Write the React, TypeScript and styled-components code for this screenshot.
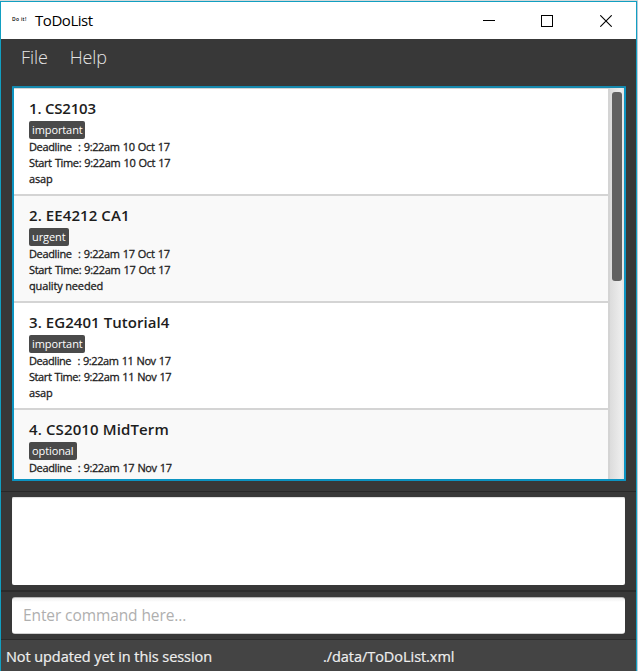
import React from "react";
import styled, { createGlobalStyle } from "styled-components";

const GlobalStyle = createGlobalStyle`
  * { box-sizing: border-box; }
  html, body { margin: 0; padding: 0; overflow: hidden; }
  body { font-family: "Open Sans", "Noto Sans", sans-serif; background: #c3d3e2; }
`;

const Desktop = styled.div`
  width: 638px;
  height: 671px;
  padding-top: 1px;
  background: linear-gradient(#d5d9da 0 1px, #b9cbdc 1px);
`;

const Window = styled.div`
  width: 637px;
  height: 670px;
  display: flex;
  flex-direction: column;
  border: 1px solid #129fc1;
  border-bottom: 0;
  background: #383838;
`;

const TitleBar = styled.header`
  height: 37px;
  flex: none;
  display: flex;
  align-items: center;
  background: #fff;
  color: #000;
`;

const AppIcon = styled.span`
  width: 16px;
  margin-left: 11px;
  padding-bottom: 3px;
  font-size: 5px;
  font-weight: 600;
  line-height: 8px;
  letter-spacing: 0.3px;
  white-space: nowrap;
`;

const AppTitle = styled.span`
  flex: 1;
  margin-left: 7px;
  padding-bottom: 1px;
  font-size: 15px;
  line-height: 20px;
  letter-spacing: -0.45px;
`;

const WindowButton = styled.button`
  width: 58px;
  height: 37px;
  padding: 0;
  border: 0;
  display: grid;
  place-items: center;
  background: transparent;

  &:last-child { width: 60px; }
`;

const Controls = styled.div`
  display: flex;
`;

const MenuBar = styled.nav`
  height: 47px;
  flex: none;
  display: flex;
  gap: 22px;
  padding: 6px 20px 0;
  color: #e4e4e4;
`;

const MenuItem = styled.span<{ $track: number }>`
  font-size: 18px;
  font-weight: 300;
  line-height: 24px;
  letter-spacing: ${(p) => p.$track}px;
`;

const ListFrame = styled.section`
  height: 395px;
  flex: none;
  margin: 0 10px 0 11px;
  border: 2px solid #0c94c2;
  border-top-color: #1689ae;
  border-radius: 1px;
  display: flex;
  overflow: hidden;
  background: #fff;
`;

const TaskList = styled.div`
  flex: 1;
  height: 391px;
  overflow: hidden;
  border-top: 1px solid #d4d4d4;
`;

const TaskCell = styled.article<{ $shaded: boolean }>`
  height: 107px;
  padding: 7px 15px 0;
  display: flex;
  flex-direction: column;
  align-items: flex-start;
  border-bottom: 2px solid #d4d4d4;
  background: ${(p) => (p.$shaded ? "#f9f9f9" : "#fff")};
  color: #1d1d1d;
`;

const TaskTitle = styled.h2<{ $track: number }>`
  margin: 0 0 1px;
  font-size: 15px;
  font-weight: 600;
  line-height: 24px;
  letter-spacing: ${(p) => p.$track}px;
  white-space: pre;
`;

const Tag = styled.span<{ $width: number }>`
  width: ${(p) => p.$width}px;
  height: 18px;
  padding-left: 3px;
  border-radius: 2px;
  background: #4a4a4a;
  color: #fff;
  font-size: 11px;
  line-height: 18px;
  letter-spacing: -0.1px;
  white-space: nowrap;
`;

const Detail = styled.span<{ $track: number; $wordGap?: number }>`
  font-size: 11px;
  line-height: 16px;
  letter-spacing: ${(p) => p.$track}px;
  word-spacing: ${(p) => p.$wordGap ?? 0}px;
  -webkit-text-stroke: 0.3px #1d1d1d;
  white-space: pre;
`;

const ScrollTrack = styled.div`
  width: 16px;
  height: 391px;
  padding: 4px 2px 0;
  border-left: 2px solid #d4d4d4;
  background: linear-gradient(90deg, #dcdcdc, #ededed 80%, #e2e2e2);
`;

const ScrollThumb = styled.div`
  width: 10px;
  height: 189px;
  border-radius: 3px;
  background: #616161;
`;

const ResultPane = styled.section`
  height: 99px;
  flex: none;
  margin-top: 10px;
  padding: 5px 11px 0;
  border-top: 1px solid #282828;
`;

const ResultDisplay = styled.div`
  height: 88px;
  border-radius: 2px;
  background: #fff;
  box-shadow: inset 0 1px 1px #ddd;
`;

const CommandPane = styled.section`
  height: 49px;
  flex: none;
  padding: 5px 11px 0;
  border-top: 2px solid #2b2b2b;
`;

const CommandInput = styled.input`
  display: block;
  width: 613px;
  height: 37px;
  padding: 0 0 1px 11px;
  border: 1px solid #b5b5b5;
  border-bottom-color: #d0d0d0;
  border-right: 0;
  border-left: 0;
  border-radius: 3px;
  outline: 0;
  background: linear-gradient(#eee, #fff 4px);
  font-family: inherit;
  font-size: 15.5px;
  letter-spacing: -0.1px;

  &::placeholder { color: #afafaf; opacity: 1; }
`;

const StatusBar = styled.footer`
  flex: 1;
  display: grid;
  grid-template-columns: 317px 1fr;
  padding: 5px 5px 0;
  border-top: 1px solid #2b2b2b;
  background: #444;
  color: #eee;
`;

const StatusText = styled.span<{ $track: number }>`
  font-size: 14.5px;
  line-height: 24px;
  letter-spacing: ${(p) => p.$track}px;
  -webkit-text-stroke: 0.2px #eee;
  white-space: nowrap;
`;

const tagWidths: Record<string, number> = { important: 56, urgent: 40, optional: 48 };

const tasks = [
  { title: "1. CS2103", track: -0.2, tag: "important", date: "9:22am 10 Oct 17", dateTrack: -0.36, note: "asap" },
  { title: "2. EE4212 CA1", track: 0.08, tag: "urgent", date: "9:22am 17 Oct 17", dateTrack: -0.36, note: "quality needed" },
  { title: "3. EG2401 Tutorial4", track: 0.06, tag: "important", date: "9:22am 11 Nov 17", dateTrack: -0.42, note: "asap" },
  { title: "4. CS2010 MidTerm", track: 0.12, tag: "optional", date: "9:22am 17 Nov 17", dateTrack: -0.38, note: "" },
];

export default function App() {
  return (
    <Desktop>
      <GlobalStyle />
      <Window>
        <TitleBar>
          <AppIcon>Do it!</AppIcon>
          <AppTitle>ToDoList</AppTitle>
          <Controls>
            <WindowButton aria-label="Minimize">
              <svg width="12" height="12" shapeRendering="crispEdges"><path d="M0 5.5H12" stroke="#000" /></svg>
            </WindowButton>
            <WindowButton aria-label="Maximize">
              <svg width="12" height="12" shapeRendering="crispEdges"><rect x=".5" y=".5" width="11" height="11" fill="none" stroke="#000" /></svg>
            </WindowButton>
            <WindowButton aria-label="Close">
              <svg width="12" height="12"><path d="M.3.3 11.7 11.7M11.7.3.3 11.7" stroke="#000" strokeWidth="1.1" /></svg>
            </WindowButton>
          </Controls>
        </TitleBar>
        <MenuBar>
          <MenuItem $track={-0.1}>File</MenuItem>
          <MenuItem $track={-0.15}>Help</MenuItem>
        </MenuBar>
        <ListFrame>
          <TaskList>
            {tasks.map((task, i) => (
              <TaskCell key={task.title} $shaded={i % 2 === 1}>
                <TaskTitle $track={task.track}>{task.title}</TaskTitle>
                <Tag $width={tagWidths[task.tag]}>{task.tag}</Tag>
                <Detail $track={task.dateTrack} $wordGap={0.7}>{`Deadline  : ${task.date}`}</Detail>
                {task.note && <Detail $track={task.dateTrack} $wordGap={0.7}>{`Start Time: ${task.date}`}</Detail>}
                {task.note && <Detail $track={-0.15}>{task.note}</Detail>}
              </TaskCell>
            ))}
          </TaskList>
          <ScrollTrack><ScrollThumb /></ScrollTrack>
        </ListFrame>
        <ResultPane><ResultDisplay /></ResultPane>
        <CommandPane><CommandInput placeholder="Enter command here..." /></CommandPane>
        <StatusBar>
          <StatusText $track={-0.08}>Not updated yet in this session</StatusText>
          <StatusText $track={-0.05}>./data/ToDoList.xml</StatusText>
        </StatusBar>
      </Window>
    </Desktop>
  );
}
